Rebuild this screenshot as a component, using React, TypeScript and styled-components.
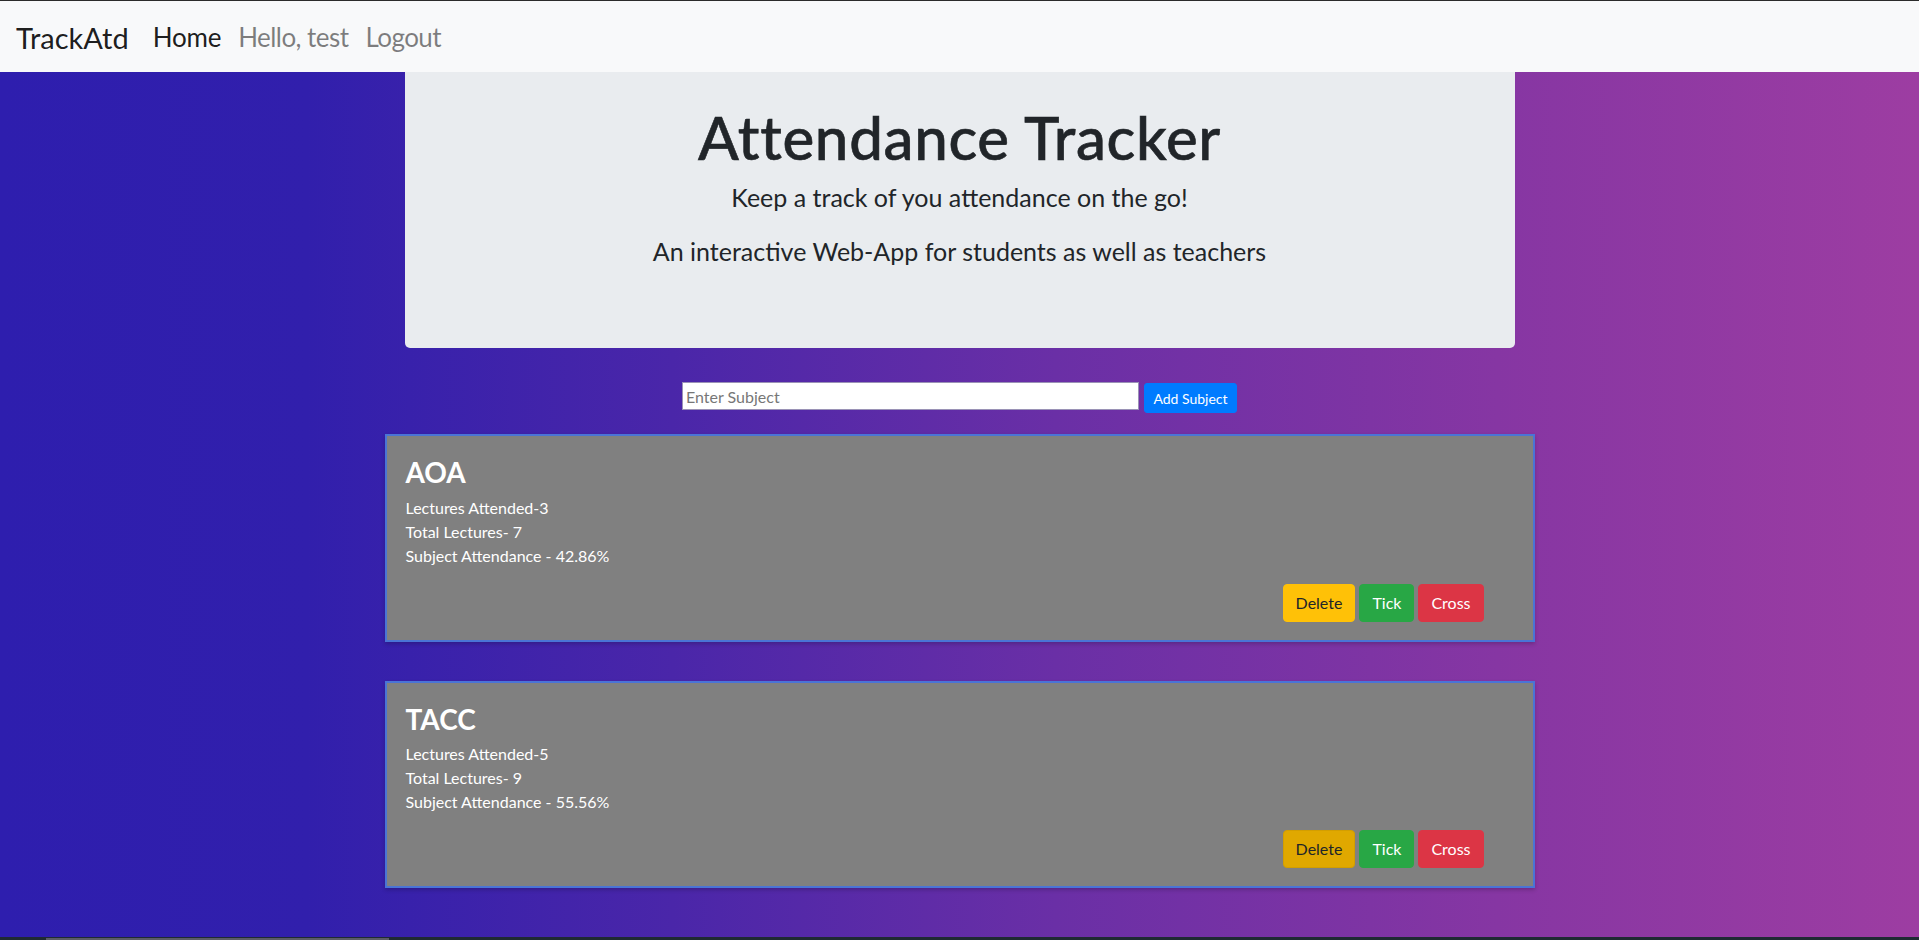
import * as React from 'react';
import styled, { createGlobalStyle } from 'styled-components';

interface ISubject {
    id: number;
    name: string;
    attended: number;
    total: number;
}

interface IState {
    subjects: ISubject[];
    subjectName: string;
}

const GlobalStyle = createGlobalStyle`
    html, body {
        margin: 0;
        padding: 0;
    }
    body {
        font-family: Lato, "Noto Sans", "Liberation Sans", sans-serif;
        color: #212529;
        overflow: hidden;
    }
    * {
        box-sizing: border-box;
    }
`;

const Page = styled.div`
    min-height: 100vh;
    display: flex;
    flex-direction: column;
    background: linear-gradient(90deg, #2e1eae 0%, #311fac 16%, #4a26a9 35%, #6a2fa6 55%, #8636a3 78%, #9d3da2 100%);
`;

const Navbar = styled.nav`
    height: 72px;
    border-top: 1px solid #2b2b2b;
    background: #f8f9fa;
    display: flex;
    align-items: center;
    padding: 3px 16px 0;
`;

const Brand = styled.a`
    font-size: 29px;
    line-height: 1.2;
    color: rgba(0, 0, 0, 0.9);
    text-decoration: none;
    margin-right: 24px;
`;

const NavList = styled.div`
    display: flex;
    gap: 17px;
`;

const NavLink = styled.a<{ $active?: boolean }>`
    font-size: 26px;
    line-height: 1.2;
    letter-spacing: ${p => (p.$active ? '-0.2px' : '-0.55px')};
    text-decoration: none;
    color: ${p => (p.$active ? 'rgba(0, 0, 0, 0.9)' : 'rgba(0, 0, 0, 0.5)')};
`;

const Main = styled.main`
    flex: 1;
    width: 1150px;
    margin: 0 auto;
`;

const Jumbotron = styled.div`
    height: 276px;
    margin: 0 20px;
    padding-top: 29px;
    background: #e9ecef;
    border-radius: 0 0 5px 5px;
    text-align: center;
`;

const Title = styled.h1`
    margin: 0 0 9px;
    font-size: 60px;
    font-weight: 500;
    letter-spacing: 0.7px;
    line-height: 1.2;
    color: #212529;
    -webkit-text-stroke: 0.6px #212529;
`;

const Lead = styled.p<{ $gap: number }>`
    margin: 0 0 ${p => p.$gap}px;
    font-size: 25px;
    font-weight: 400;
    line-height: 1.2;
    color: #212529;
`;

const AddRow = styled.div`
    margin-top: 34px;
    display: flex;
    justify-content: center;
    align-items: flex-start;
    gap: 5px;
`;

const SubjectInput = styled.input`
    width: 457px;
    height: 28px;
    padding: 0 3px;
    border: 1px solid #9a92b6;
    background: #fff;
    font-family: Lato, "Noto Sans", sans-serif;
    font-size: 16px;
    color: #212529;
    outline: none;

    &::placeholder {
        color: #777;
    }
`;

const AddButton = styled.button`
    margin-top: 1px;
    width: 93px;
    height: 30px;
    padding: 0;
    border: 1px solid #007bff;
    border-radius: 3px;
    background: #007bff;
    color: #fff;
    font-family: Lato, "Noto Sans", sans-serif;
    font-size: 14px;
    cursor: pointer;
`;

const CardList = styled.div`
    margin-top: 21px;
    display: flex;
    flex-direction: column;
    gap: 39px;
`;

const Card = styled.div`
    border: 2px solid #4a74d6;
    background: #808080;
    padding: 20px 19px 18px;
    color: #fff;
    box-shadow: 0 2px 4px rgba(0, 0, 0, 0.2);
`;

const CardTitle = styled.h3`
    margin: 0 0 6px;
    font-size: 28px;
    font-weight: 700;
    line-height: 1.2;
`;

const CardLine = styled.div`
    font-size: 16px;
    line-height: 24px;
`;

const Actions = styled.div`
    margin-top: 16px;
    margin-right: 30px;
    display: flex;
    justify-content: flex-end;
    gap: 4px;
`;

const variants: { [k: string]: { bg: string; border: string; color: string } } = {
    warning: { bg: '#ffc107', border: '#ffc107', color: '#212529' },
    warningHover: { bg: '#e0a800', border: '#d39e00', color: '#212529' },
    success: { bg: '#28a745', border: '#28a745', color: '#fff' },
    danger: { bg: '#dc3545', border: '#dc3545', color: '#fff' }
};

const ActionButton = styled.button<{ $variant: string }>`
    height: 38px;
    padding: 6px 12px;
    border-radius: 4px;
    border: 1px solid ${p => variants[p.$variant].border};
    background: ${p => variants[p.$variant].bg};
    color: ${p => variants[p.$variant].color};
    font-family: Lato, "Noto Sans", sans-serif;
    font-size: 16px;
    line-height: 24px;
    cursor: pointer;
`;

const BottomStrip = styled.div`
    height: 3px;
    background: #1f2a33;
    display: flex;
    align-items: flex-end;
`;

const StripThumb = styled.div`
    margin-left: 46px;
    width: 343px;
    height: 2px;
    background: #5c5c68;
`;

export default class App extends React.Component<any, IState> {
    state: IState = {
        subjects: [
            { id: 1, name: 'AOA', attended: 3, total: 7 },
            { id: 2, name: 'TACC', attended: 5, total: 9 }
        ],
        subjectName: ''
    }

    handleAdd = () => {
        const { subjects, subjectName } = this.state;
        if (!subjectName.trim()) return;
        this.setState({
            subjects: [...subjects, { id: Date.now(), name: subjectName.trim(), attended: 0, total: 0 }],
            subjectName: ''
        });
    }

    handleDelete = (id: number) => {
        this.setState({ subjects: this.state.subjects.filter(s => s.id !== id) });
    }

    handleMark = (id: number, present: boolean) => {
        this.setState({
            subjects: this.state.subjects.map(s => s.id === id
                ? { ...s, attended: s.attended + (present ? 1 : 0), total: s.total + 1 }
                : s)
        });
    }

    render () {
        const { subjects, subjectName } = this.state;

        return (
            <Page>
                <GlobalStyle />
                <Navbar>
                    <Brand href="#">TrackAtd</Brand>
                    <NavList>
                        <NavLink href="#" $active>Home</NavLink>
                        <NavLink href="#">Hello, test</NavLink>
                        <NavLink href="#">Logout</NavLink>
                    </NavList>
                </Navbar>
                <Main>
                    <Jumbotron>
                        <Title>Attendance Tracker</Title>
                        <Lead $gap={24}>Keep a track of you attendance on the go!</Lead>
                        <Lead $gap={0}>An interactive Web-App for students as well as teachers</Lead>
                    </Jumbotron>
                    <AddRow>
                        <SubjectInput
                            placeholder="Enter Subject"
                            value={subjectName}
                            onChange={e => this.setState({ subjectName: e.target.value })}
                        />
                        <AddButton onClick={this.handleAdd}>Add Subject</AddButton>
                    </AddRow>
                    <CardList>
                        {subjects.map((s, i) => {
                            const pct = s.total ? (s.attended / s.total * 100).toFixed(2) : '0.00';
                            return (
                                <Card key={s.id}>
                                    <CardTitle>{s.name}</CardTitle>
                                    <CardLine>Lectures Attended-{s.attended}</CardLine>
                                    <CardLine>Total Lectures- {s.total}</CardLine>
                                    <CardLine>Subject Attendance - {pct}%</CardLine>
                                    <Actions>
                                        {/* second card's delete is shown in its hover state */}
                                        <ActionButton
                                            $variant={i === 1 ? 'warningHover' : 'warning'}
                                            onClick={() => this.handleDelete(s.id)}
                                        >Delete</ActionButton>
                                        <ActionButton $variant="success" onClick={() => this.handleMark(s.id, true)}>Tick</ActionButton>
                                        <ActionButton $variant="danger" onClick={() => this.handleMark(s.id, false)}>Cross</ActionButton>
                                    </Actions>
                                </Card>
                            );
                        })}
                    </CardList>
                </Main>
                <BottomStrip>
                    <StripThumb />
                </BottomStrip>
            </Page>
        )
    }
}
